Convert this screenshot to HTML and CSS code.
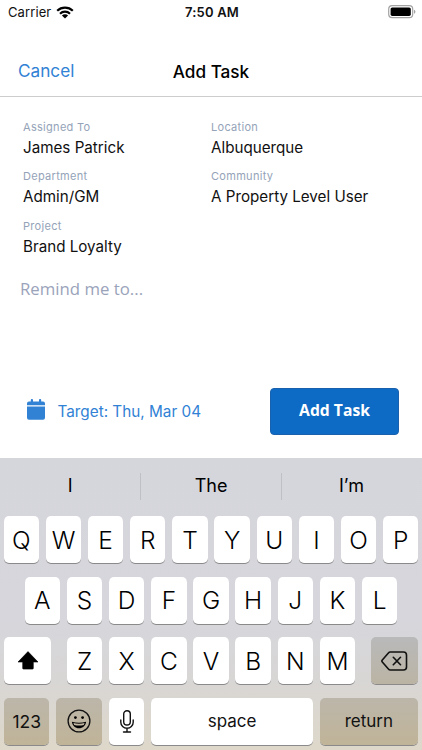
FILE: index.html
```
<!DOCTYPE html>
<html lang="en">
<head>
    <meta charset="UTF-8">
    <meta name="viewport" content="width=device-width, initial-scale=1.0">
    <title>Add Task</title>
    <link rel="stylesheet" href="styles.css">
</head>
<body>

    <!-- Status bar -->
    <div class="status-bar">
        <div class="carrier">
            <span>Carrier</span>
            <svg class="wifi" width="18" height="13" viewBox="0 0 18 13">
                <path d="M1.2 4.7a11.2 11.2 0 0 1 15.6 0M4 7.7a7.2 7.2 0 0 1 10 0" fill="none" stroke="#000" stroke-width="2.2"/>
                <path d="M9 12.6L5.9 9.6a4.4 4.4 0 0 1 6.2 0z"/>
            </svg>
        </div>
        <div class="time">7:50 AM</div>
        <svg class="battery" width="28" height="14" viewBox="0 0 28 14">
            <rect x=".7" y=".7" width="24" height="12" rx="3.4" fill="none" stroke="#a3a3a3" stroke-width="1.2"/>
            <rect x="2.6" y="2.5" width="20.2" height="8.4" rx="1.6"/>
            <path d="M26 4.7c1.9.7 1.9 3.3 0 4z" fill="#a3a3a3"/>
        </svg>
    </div>

    <div class="header">
        <a class="cancel">Cancel</a>
        <h1>Add Task</h1>
    </div>

    <div class="details">
        <div class="field">
            <label>Assigned To</label>
            <p>James Patrick</p>
        </div>
        <div class="field">
            <label>Location</label>
            <p>Albuquerque</p>
        </div>
        <div class="field">
            <label>Department</label>
            <p>Admin/GM</p>
        </div>
        <div class="field">
            <label>Community</label>
            <p>A Property Level User</p>
        </div>
        <div class="field">
            <label>Project</label>
            <p>Brand Loyalty</p>
        </div>
    </div>

    <div class="reminder">Remind me to...</div>

    <div class="actions">
        <div class="target">
            <svg width="18" height="21" viewBox="0 0 18 21">
                <path d="M0 6.3V4.4a2 2 0 0 1 2-2h1.8V.9a.9.9 0 0 1 .9-.9h.4a.9.9 0 0 1 .9.9v1.5h6V.9a.9.9 0 0 1 .9-.9h.4a.9.9 0 0 1 .9.9v1.5H16a2 2 0 0 1 2 2v1.9zM0 7.6h18v11.2a2 2 0 0 1-2 2H2a2 2 0 0 1-2-2z" fill="#3182d5"/>
            </svg>
            <span>Target: Thu, Mar 04</span>
        </div>
        <button class="add-task">Add Task</button>
    </div>

    <!-- Keyboard -->
    <div class="keyboard">
        <div class="suggestions">
            <div>I</div>
            <div>The</div>
            <div>I’m</div>
        </div>
        <div class="row">
            <div class="key">Q</div>
            <div class="key">W</div>
            <div class="key">E</div>
            <div class="key">R</div>
            <div class="key">T</div>
            <div class="key">Y</div>
            <div class="key">U</div>
            <div class="key">I</div>
            <div class="key">O</div>
            <div class="key">P</div>
        </div>
        <div class="row">
            <div class="key">A</div>
            <div class="key">S</div>
            <div class="key">D</div>
            <div class="key">F</div>
            <div class="key">G</div>
            <div class="key">H</div>
            <div class="key">J</div>
            <div class="key">K</div>
            <div class="key">L</div>
        </div>
        <div class="row">
            <div class="key shift">
                <svg width="22" height="19" viewBox="0 0 22 19">
                    <path d="M11 .6L21 11h-4.7v6.2a.9.9 0 0 1-.9.9H6.6a.9.9 0 0 1-.9-.9V11H1z" stroke="#000" stroke-width=".6" stroke-linejoin="round"/>
                </svg>
            </div>
            <div class="key">Z</div>
            <div class="key">X</div>
            <div class="key">C</div>
            <div class="key">V</div>
            <div class="key">B</div>
            <div class="key">N</div>
            <div class="key">M</div>
            <div class="key delete">
                <svg width="27" height="20" viewBox="0 0 27 20" fill="none" stroke="#111" stroke-width="1.6" stroke-linecap="round" stroke-linejoin="round">
                    <path d="M9.3 1H22.5a3 3 0 0 1 3 3v12a3 3 0 0 1-3 3H9.3a2.5 2.5 0 0 1-1.9-.9L1.3 11a1.5 1.5 0 0 1 0-2L7.4 1.9A2.5 2.5 0 0 1 9.3 1zM12.3 6.3l7.2 7.4M19.5 6.3l-7.2 7.4"/>
                </svg>
            </div>
        </div>
        <div class="row">
            <div class="key dark numbers">123</div>
            <div class="key dark emoji">
                <svg width="24" height="24" viewBox="0 0 24 24">
                    <circle cx="12" cy="12" r="10.9" fill="none" stroke="#111" stroke-width="1.3"/>
                    <circle cx="8.4" cy="8.6" r="1.4"/>
                    <circle cx="15.6" cy="8.6" r="1.4"/>
                    <path d="M4.9 12.7c4.6 1.3 9.6 1.3 14.2 0-.5 4.1-3.4 6.5-7.1 6.5s-6.6-2.4-7.1-6.5z"/>
                    <path d="M6.4 14.1c3.7.8 7.5.8 11.2 0l-.8 1.8c-3.2.7-6.4.7-9.6 0z" fill="#c2b8a2"/>
                </svg>
            </div>
            <div class="key">
                <svg width="14" height="23" viewBox="0 0 14 23" fill="none" stroke="#111" stroke-width="1.4" stroke-linecap="round">
                    <rect x="3.7" y=".8" width="6.6" height="14.2" rx="3.3"/>
                    <path d="M.8 10v2.3a6.2 6 0 0 0 12.4 0V10M7 18.4V22M3.5 22h7"/>
                </svg>
            </div>
            <div class="key space">space</div>
            <div class="key dark return">return</div>
        </div>
    </div>

</body>
</html>
```
FILE: styles.css
```
body {
    margin: 0;
    width: 422px;
    height: 750px;
    display: flex;
    flex-direction: column;
    background: #fff;
    color: #111;
    font-family: Inter, sans-serif;
    overflow: hidden;
}

h1, p {
    margin: 0;
}

svg {
    display: block;
    flex-shrink: 0;
}

.status-bar {
    display: grid;
    grid-template-columns: 1fr auto 1fr;
    align-items: center;
    height: 24px;
    padding: 0 6px 0 8px;
    font-size: 13px;
}

.carrier {
    display: flex;
    align-items: center;
    gap: 5px;
    letter-spacing: 0.1px;
}

.time {
    font-weight: 600;
    letter-spacing: 0.2px;
}

.battery {
    justify-self: end;
}

.header {
    display: grid;
    grid-template-columns: 1fr auto 1fr;
    align-items: center;
    height: 48px;
    padding: 24px 18px 0;
    border-bottom: 1px solid #cdcdcf;
}

.cancel {
    color: #3182d5;
    font-size: 17.2px;
    line-height: 20px;
    margin-bottom: 2px;
}

.header h1 {
    font-size: 17.2px;
    font-weight: 500;
    line-height: 20px;
    margin-bottom: 1px;
    color: #000;
}

.details {
    display: grid;
    grid-template-columns: 188px 1fr;
    row-gap: 9.3px;
    padding: 23px 23px 0;
}

.field {
    height: 40px;
}

.field label {
    display: block;
    font-size: 11px;
    line-height: 14px;
    letter-spacing: 0.3px;
    color: #94a3b8;
}

.field p {
    margin-top: 4px;
    font-size: 15.2px;
    line-height: 20px;
}

.reminder {
    height: 111.4px;
    padding: 18px 20px 0;
    font-family: "Open Sans", sans-serif;
    font-size: 16.8px;
    line-height: 24px;
    color: #9aa3ba;
}

.actions {
    display: flex;
    justify-content: space-between;
    align-items: center;
    height: 47px;
    padding: 0 23px 0 26.5px;
}

.target {
    display: flex;
    align-items: center;
    gap: 13px;
    font-size: 15.3px;
    color: #3182d5;
}

.target svg {
    margin-bottom: 4px;
}

.add-task {
    width: 129px;
    height: 47px;
    padding: 0 0 3px;
    border: 1px solid #1a61ad;
    border-radius: 4px;
    background: #0d6bc5;
    color: #fff;
    font-family: "Open Sans", sans-serif;
    font-size: 15.7px;
    font-weight: 700;
}

.keyboard {
    margin-top: auto;
    height: 292.5px;
    box-sizing: border-box;
    padding: 0 3.7px;
    background: linear-gradient(#d5d6dc 0%, #d6d6dc 55%, #d8d6d5 75%, #ded8ca 100%);
    color: #000;
}

.suggestions {
    display: flex;
    align-items: center;
    height: 58.5px;
    margin: 0 -3.7px;
}

.suggestions div {
    box-sizing: border-box;
    width: 140.4px;
    height: 27px;
    line-height: 26px;
    text-align: center;
    font-size: 18px;
}

.suggestions div + div {
    border-left: 1px solid #bfc0c6;
}

.row {
    display: flex;
    justify-content: center;
    gap: 6.77px;
    margin-bottom: 13.3px;
}

.key {
    display: flex;
    align-items: center;
    justify-content: center;
    width: 35.4px;
    height: 47.3px;
    border-radius: 5px;
    background: #fff;
    box-shadow: 0 1px 0 #8b8a8b;
    font-size: 24.5px;
    font-weight: 350;
}

.shift {
    width: 47px;
    margin-right: 8.8px;
}

.delete {
    width: 47px;
    margin-left: 8.8px;
    background: linear-gradient(#b9b9ba, #bbb4a4);
}

.dark {
    background: linear-gradient(#bcb6aa, #c0b498);
}

.numbers,
.space,
.return {
    font-size: 17px;
    font-weight: 400;
    color: #111;
}

.numbers {
    width: 45.3px;
    font-size: 17.5px;
}

.emoji {
    width: 46px;
}

.space {
    width: 162px;
}

.return {
    width: 98px;
}
```
